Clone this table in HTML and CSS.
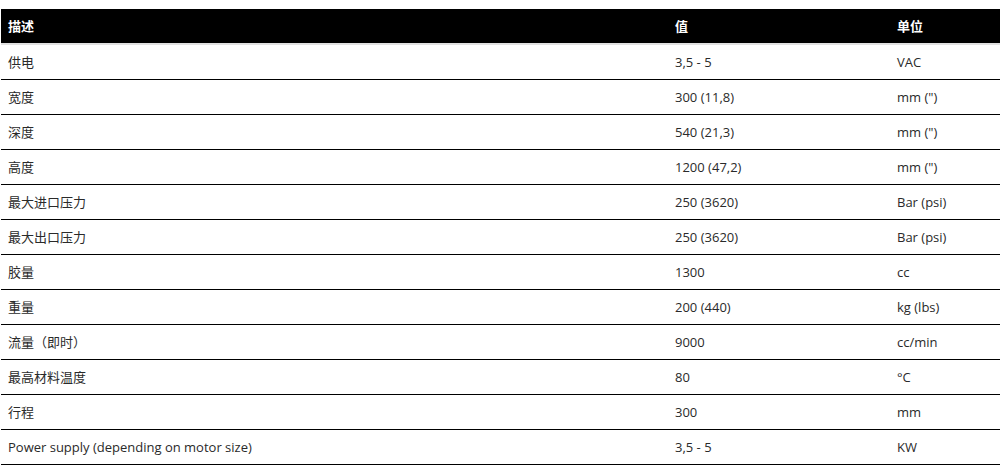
FILE: index.html
```html
<!DOCTYPE html>
<html lang="zh">
<head>
<meta charset="utf-8">
<link rel="stylesheet" href="styles.css">
</head>
<body>
<table class="spec">
  <thead>
    <tr><th class="c1">描述</th><th class="c2">值</th><th class="c3">单位</th></tr>
  </thead>
  <tbody>
    <tr><td>供电</td><td>3,5 - 5</td><td>VAC</td></tr>
    <tr><td>宽度</td><td>300 (11,8)</td><td>mm (")</td></tr>
    <tr><td>深度</td><td>540 (21,3)</td><td>mm (")</td></tr>
    <tr><td>高度</td><td>1200 (47,2)</td><td>mm (")</td></tr>
    <tr><td>最大进口压力</td><td>250 (3620)</td><td>Bar (psi)</td></tr>
    <tr><td>最大出口压力</td><td>250 (3620)</td><td>Bar (psi)</td></tr>
    <tr><td>胶量</td><td>1300</td><td>cc</td></tr>
    <tr><td>重量</td><td>200 (440)</td><td>kg (lbs)</td></tr>
    <tr><td>流量（即时）</td><td>9000</td><td>cc/min</td></tr>
    <tr><td>最高材料温度</td><td>80</td><td>°C</td></tr>
    <tr><td>行程</td><td>300</td><td>mm</td></tr>
    <tr><td>Power supply (depending on motor size)</td><td>3,5 - 5</td><td>KW</td></tr>
  </tbody>
</table>
</body>
</html>
```
FILE: styles.css
```css
html, body {
  margin: 0;
  padding: 0;
  background: #fff;
}
body {
  padding: 9px 0 0 1px;
  font-family: "Open Sans", "Noto Sans CJK SC", sans-serif;
  font-size: 13px;
  color: #2a2a2a;
}
.spec {
  border-collapse: collapse;
  width: 1010px;
  table-layout: fixed;
}
.spec th, .spec td {
  text-align: left;
  padding: 0 0 1px 7px;
  vertical-align: middle;
  white-space: nowrap;
}
.spec thead tr {
  background: #000;
  border-bottom: 2px solid #e0e0e0;
}
.spec th {
  height: 33px;
  color: #fff;
  font-weight: 600;
}
.spec .c1 { width: 660px; }
.spec .c2 { width: 215px; }
.spec td {
  height: 33px;
  border-bottom: 1px solid #000;
}
```
